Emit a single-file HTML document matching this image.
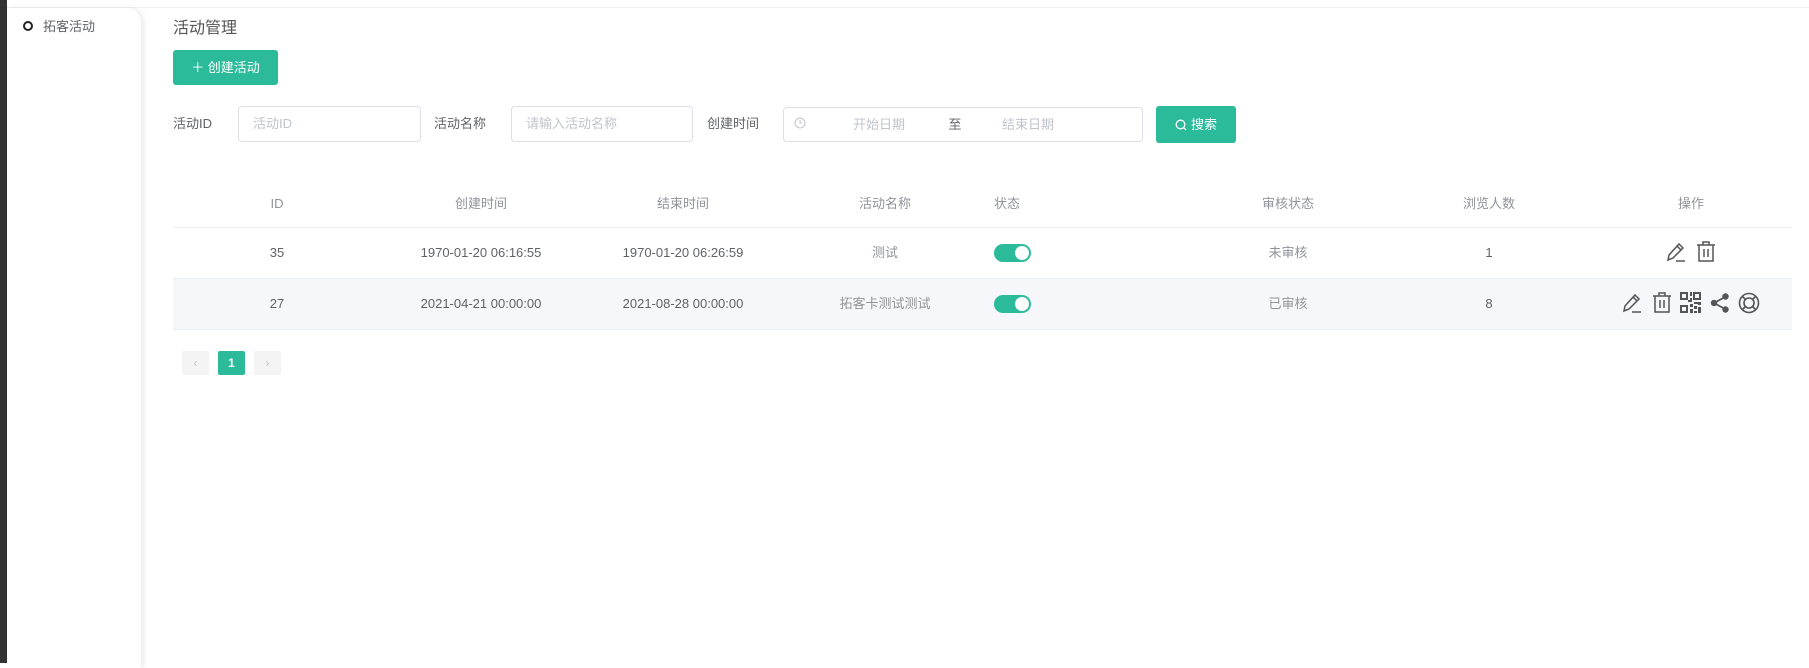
<!DOCTYPE html>
<html><head><meta charset="utf-8"><style>
*{box-sizing:border-box;margin:0;padding:0}
body{width:1809px;height:663px;background:#fff;font-family:"Liberation Sans","Noto Sans CJK SC",sans-serif;position:relative;overflow:hidden;color:#606266;font-size:13px;line-height:16px}
.a{position:absolute}
.dark{left:0;top:0;width:7px;height:663px;background:#333}
.topl{left:7px;top:7px;width:1802px;height:1px;background:#eef0f3}
.side{left:7px;top:8px;width:134px;height:660px;background:#fff;border-top-right-radius:14px;box-shadow:3px 0 6px rgba(0,0,0,.08)}
.btn{background:#2bbb9b;color:#fff;border-radius:3px;display:flex;align-items:center;justify-content:center;font-size:13px}
.inp{border:1px solid #dcdfe6;border-radius:4px;background:#fff;color:#c0c4cc;font-size:13px;display:flex;align-items:center}
.lbl{font-size:13px;color:#606266}
.c{transform:translateX(-50%);white-space:nowrap}
.th{top:196px;color:#909399;font-size:13px}
.r1{top:245px}.r2{top:296px}
.tog{width:37px;height:18px;border-radius:9px;background:#2bbb9b}
.tog:after{content:"";position:absolute;right:2px;top:2px;width:14px;height:14px;border-radius:50%;background:#fff}
.pg{width:27px;height:24px;background:#f4f4f5;border-radius:2px;color:#c0c4cc;display:flex;align-items:center;justify-content:center;font-size:12px;top:351px}
svg{position:absolute}
</style></head><body>
<div class="a dark"></div><div class="a topl"></div>
<div class="a side"></div>
<div class="a" style="left:23px;top:21px;width:10px;height:10px;border:2px solid #222;border-radius:50%"></div>
<div class="a" style="left:43px;top:19px;font-size:13px;color:#606266">拓客活动</div>
<div class="a" style="left:173px;top:20px;font-size:16px;line-height:18px;color:#555">活动管理</div>
<div class="a btn" style="left:173px;top:50px;width:105px;height:35px">＋ 创建活动</div>

<div class="a lbl" style="left:173px;top:116px">活动ID</div>
<div class="a inp" style="left:238px;top:106px;width:183px;height:36px;padding-left:14px">活动ID</div>
<div class="a lbl" style="left:434px;top:116px">活动名称</div>
<div class="a inp" style="left:511px;top:106px;width:182px;height:36px;padding-left:14px">请输入活动名称</div>
<div class="a lbl" style="left:707px;top:116px">创建时间</div>
<div class="a inp" style="left:783px;top:107px;width:360px;height:35px"></div>
<svg style="left:794px;top:117px" width="12" height="12" viewBox="0 0 12 12"><circle cx="6" cy="6" r="5" fill="none" stroke="#c0c4cc"/><path d="M6 3v3h2" fill="none" stroke="#c0c4cc"/></svg>
<div class="a c" style="left:879px;top:117px;color:#c0c4cc">开始日期</div>
<div class="a c" style="left:955px;top:117px;color:#606266">至</div>
<div class="a c" style="left:1028px;top:117px;color:#c0c4cc">结束日期</div>
<div class="a btn" style="left:1156px;top:106px;width:80px;height:37px">
<svg style="position:static;margin-right:4px" width="12" height="12" viewBox="0 0 12 12"><circle cx="5.5" cy="5.5" r="4.3" fill="none" stroke="#fff" stroke-width="1.3"/><path d="M8.6 8.6L11 11" stroke="#fff" stroke-width="1.3"/></svg>搜索</div>

<div class="a th c" style="left:277px">ID</div>
<div class="a th c" style="left:481px">创建时间</div>
<div class="a th c" style="left:683px">结束时间</div>
<div class="a th c" style="left:885px">活动名称</div>
<div class="a th" style="left:994px">状态</div>
<div class="a th c" style="left:1288px">审核状态</div>
<div class="a th c" style="left:1489px">浏览人数</div>
<div class="a th c" style="left:1691px">操作</div>
<div class="a" style="left:173px;top:227px;width:1619px;height:1px;background:#ebeef5"></div>
<div class="a" style="left:173px;top:278px;width:1619px;height:1px;background:#ebeef5"></div>
<div class="a" style="left:173px;top:279px;width:1619px;height:50px;background:#f5f7fa"></div>
<div class="a" style="left:173px;top:329px;width:1619px;height:1px;background:#ebeef5"></div>

<div class="a r1 c" style="left:277px">35</div>
<div class="a r1 c" style="left:481px">1970-01-20 06:16:55</div>
<div class="a r1 c" style="left:683px">1970-01-20 06:26:59</div>
<div class="a r1 c" style="left:885px;color:#909399">测试</div>
<div class="a tog" style="left:994px;top:244px"></div>
<div class="a r1 c" style="left:1288px;color:#909399">未审核</div>
<div class="a r1 c" style="left:1489px">1</div>

<div class="a r2 c" style="left:277px">27</div>
<div class="a r2 c" style="left:481px">2021-04-21 00:00:00</div>
<div class="a r2 c" style="left:683px">2021-08-28 00:00:00</div>
<div class="a r2 c" style="left:885px;color:#909399">拓客卡测试测试</div>
<div class="a tog" style="left:994px;top:295px"></div>
<div class="a r2 c" style="left:1288px;color:#909399">已审核</div>
<div class="a r2 c" style="left:1489px">8</div>

<svg style="left:1665px;top:241px" width="22" height="22" viewBox="0 0 22 22" fill="none" stroke="#555" stroke-width="1.5"><path d="M3 19l1-5L14 3l4 4L8 17z M12 5l4 4"/><path d="M11 20h9"/></svg>
<svg style="left:1695px;top:240px" width="22" height="22" viewBox="0 0 22 22" fill="none" stroke="#555" stroke-width="1.5"><path d="M2 5h18M8 5V2h6v3M4 5v16h14V5M9 9v8M13 9v8"/></svg>
<svg style="left:1621px;top:292px" width="22" height="22" viewBox="0 0 22 22" fill="none" stroke="#555" stroke-width="1.5"><path d="M3 19l1-5L14 3l4 4L8 17z M12 5l4 4"/><path d="M11 20h9"/></svg>
<svg style="left:1651px;top:291px" width="22" height="22" viewBox="0 0 22 22" fill="none" stroke="#555" stroke-width="1.5"><path d="M2 5h18M8 5V2h6v3M4 5v16h14V5M9 9v8M13 9v8"/></svg>
<svg style="left:1680px;top:292px" width="21" height="21" viewBox="0 0 21 21" fill="#555"><path d="M0 0h8v8H0zM2 2v4h4V2zM13 0h8v8h-8zm2 2v4h4V2zM0 13h8v8H0zm2 2v4h4v-4zM10 0h2v4h-2zM10 6h2v4H8v-2h2zM14 10h7v3h-3v-1h-4zM10 12h3v3h-3zM14 14h3v3h-3zM18 15h3v6h-3zM10 17h3v4h-3zM14 19h3v2h-3z"/></svg>
<svg style="left:1709px;top:292px" width="22" height="22" viewBox="0 0 22 22"><path d="M5 11L16 5M5 11l11 6" stroke="#555" stroke-width="1.8"/><circle cx="5" cy="11" r="3.2" fill="#555"/><circle cx="16.5" cy="4.5" r="3.2" fill="#555"/><circle cx="16.5" cy="17.5" r="3.2" fill="#555"/></svg>
<svg style="left:1738px;top:292px" width="22" height="22" viewBox="0 0 22 22" fill="none" stroke="#555" stroke-width="1.6"><circle cx="11" cy="11" r="9.5"/><circle cx="11" cy="11" r="5"/><path d="M4.5 4.5l3 3M17.5 4.5l-3 3M4.5 17.5l3-3M17.5 17.5l-3-3"/></svg>

<div class="a pg" style="left:182px">‹</div>
<div class="a pg" style="left:218px;background:#2bbb9b;color:#fff;font-weight:bold">1</div>
<div class="a pg" style="left:254px">›</div>
</body></html>
